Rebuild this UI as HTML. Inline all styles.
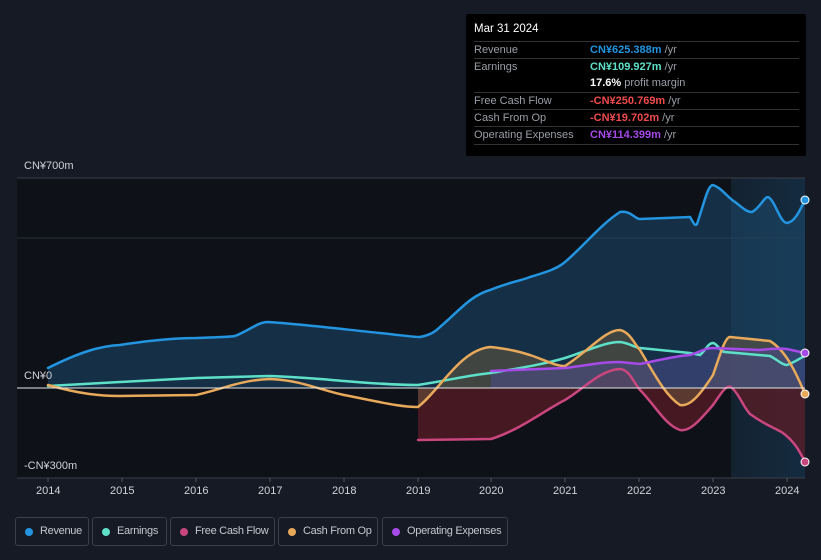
<!DOCTYPE html><html><head><style>
html,body{margin:0;background:#151a25;font-family:"Liberation Sans",sans-serif;width:821px;height:560px;overflow:hidden;position:relative}
.tt{position:absolute;left:466px;top:14px;width:340px;height:142px;background:#000;border-radius:2px}
.tt .h{position:absolute;left:8px;top:9px;color:#fff;font-size:11.5px}
.row{position:absolute;left:8px;width:325px;border-top:1px solid #333;height:17px;font-size:11px;color:#9a9ea6}
.row span{position:absolute;left:116px;top:2px;font-weight:bold;white-space:nowrap}
.row b{font-weight:normal;color:#9a9ea6}
.row .l{position:absolute;left:0;top:2px}
.ax{position:absolute;color:#d0d3d8;font-size:11px}
.lg{position:absolute;top:517px;height:29px;border:1px solid #3a3f4a;border-radius:3px;color:#c4c8ce;font-size:11px;letter-spacing:-0.3px;line-height:27px;box-sizing:border-box;padding-left:24px;white-space:nowrap}
.lg i{position:absolute;left:9px;top:10px;width:8px;height:8px;border-radius:50%}
</style></head><body>
<svg width="821" height="560" style="position:absolute;left:0;top:0">
<defs><linearGradient id="hl" x1="0" x2="1"><stop offset="0" stop-color="#152636"/><stop offset="1" stop-color="#16324a"/></linearGradient></defs>
<rect x="17" y="178" width="788" height="300" fill="#0e1118"/>
<rect x="731" y="178" width="74" height="300" fill="url(#hl)" opacity=".8"/>
<line x1="17" y1="178" x2="805" y2="178" stroke="#3a3f48"/>
<line x1="17" y1="238" x2="805" y2="238" stroke="#2a2f38"/>
<line x1="17" y1="478" x2="805" y2="478" stroke="#3a3f48"/>
<path d="M48,368 C80,352 100,346 120,345 C150,340 180,338 196,338 C220,337 230,337 235,336 C250,330 258,322 268,322 C300,324 350,330 380,333 C400,335 412,337 420,337 C430,335 435,332 440,327 C460,310 470,296 490,290 C510,282 520,281 530,277 C550,271 558,268 565,262 C585,245 600,225 620,212 C630,210 635,219 640,219 L690,217 C693,222 695,227 697,224 C705,200 708,185 713,185 C722,188 728,198 735,202 C742,207 746,212 752,212 C760,208 764,197 768,197 C775,200 780,223 787,223 C795,222 800,210 805,200 L805,388 L48,388Z" fill="#1b4a6e" opacity=".55"/>
<path d="M418,388 L418,440 L491,439 C520,430 545,410 565,400 C585,388 600,370 620,369 C630,370 633,382 640,390 C655,405 665,425 680,430 C690,432 700,420 713,405 C722,392 726,385 731,387 C740,395 742,405 750,414 C765,425 775,428 783,433 C795,442 800,452 805,462 L805,388Z" fill="#5a1c26" opacity=".75"/>
<path d="M418,388 L418,407 C440,390 460,350 490,347 C510,349 520,352 530,355 C545,360 555,366 565,366 C590,350 605,330 620,330 C630,332 635,345 640,350 C655,375 665,395 680,405 C690,407 700,395 713,375 C720,355 725,337 730,337 L770,341 C785,350 795,370 805,394 L805,388Z" fill="#6b5a3e" opacity=".5"/>
<path d="M491,388 L491,371 L565,368 L620,362 L640,364 L690,355 L713,348 L760,350 L787,349 L805,353 L805,388Z" fill="#4a4d8a" opacity=".55"/>
<g fill="none" stroke-width="2.5" stroke-linecap="round">
<path d="M48,368 C80,352 100,346 120,345 C150,340 180,338 196,338 C220,337 230,337 235,336 C250,330 258,322 268,322 C300,324 350,330 380,333 C400,335 412,337 420,337 C430,335 435,332 440,327 C460,310 470,296 490,290 C510,282 520,281 530,277 C550,271 558,268 565,262 C585,245 600,225 620,212 C630,210 635,219 640,219 L690,217 C693,222 695,227 697,224 C705,200 708,185 713,185 C722,188 728,198 735,202 C742,207 746,212 752,212 C760,208 764,197 768,197 C775,200 780,223 787,223 C795,222 800,210 805,200" stroke="#2394df"/>
<path d="M48,386 C80,384 100,383 120,382 L196,378 L270,376 C300,377 320,379 344,381 C380,384 400,385 418,385 C450,380 470,375 491,373 C520,368 545,364 565,358 C590,350 605,342 620,342 C630,343 635,348 640,348 L690,353 L700,355 C706,350 708,343 713,343 C718,344 720,352 725,352 L770,356 C778,360 782,365 787,365 C795,362 800,358 805,356" stroke="#5ee0c8"/>
<path d="M48,385 C80,394 100,396 120,396 L196,395 C220,390 240,380 270,379 C300,380 320,390 344,395 C380,402 400,407 418,407 C440,390 460,350 490,347 C510,349 520,352 530,355 C545,360 555,366 565,366 C590,350 605,330 620,330 C630,332 635,345 640,350 C655,375 665,395 680,405 C690,407 700,395 713,375 C720,355 725,337 730,337 L770,341 C785,350 795,370 805,394" stroke="#e8a95a"/>
<path d="M418,440 L491,439 C520,430 545,410 565,400 C585,388 600,370 620,369 C630,370 633,382 640,390 C655,405 665,425 680,430 C690,432 700,420 713,405 C722,392 726,385 731,387 C740,395 742,405 750,414 C765,425 775,428 783,433 C795,442 800,452 805,462" stroke="#c9467f"/>
<path d="M491,371 L565,368 C590,365 600,362 620,362 L640,364 C660,360 675,356 690,355 C700,352 705,348 713,348 L760,350 C770,349 778,348 787,349 L805,353" stroke="#a64ae8"/>
</g>
<line x1="17" y1="388" x2="805" y2="388" stroke="#e8e8e8" stroke-width="1"/>
<circle cx="805" cy="200" r="4" fill="#2394df" stroke="#fff" stroke-width="1"/>
<circle cx="805" cy="353" r="4" fill="#a64ae8" stroke="#fff" stroke-width="1"/>
<circle cx="805" cy="394" r="4" fill="#e8a95a" stroke="#fff" stroke-width="1"/>
<circle cx="805" cy="462" r="4" fill="#c9467f" stroke="#fff" stroke-width="1"/>
<g stroke="#555" stroke-width="1"><line x1="48" y1="478" x2="48" y2="482"/><line x1="122" y1="478" x2="122" y2="482"/><line x1="196" y1="478" x2="196" y2="482"/><line x1="270" y1="478" x2="270" y2="482"/><line x1="344" y1="478" x2="344" y2="482"/><line x1="418" y1="478" x2="418" y2="482"/><line x1="491" y1="478" x2="491" y2="482"/><line x1="565" y1="478" x2="565" y2="482"/><line x1="639" y1="478" x2="639" y2="482"/><line x1="713" y1="478" x2="713" y2="482"/><line x1="787" y1="478" x2="787" y2="482"/></g>
</svg>
<div class="ax" style="left:24px;top:160px">CN¥700m</div>
<div class="ax" style="left:24px;top:370px">CN¥0</div>
<div class="ax" style="left:24px;top:460px">-CN¥300m</div>
<div class="ax" style="left:36px;top:485px">2014</div><div class="ax" style="left:110px;top:485px">2015</div><div class="ax" style="left:184px;top:485px">2016</div><div class="ax" style="left:258px;top:485px">2017</div><div class="ax" style="left:332px;top:485px">2018</div><div class="ax" style="left:406px;top:485px">2019</div><div class="ax" style="left:479px;top:485px">2020</div><div class="ax" style="left:553px;top:485px">2021</div><div class="ax" style="left:627px;top:485px">2022</div><div class="ax" style="left:701px;top:485px">2023</div><div class="ax" style="left:775px;top:485px">2024</div>
<div class="tt"><div class="h">Mar 31 2024</div>
<div class="row" style="top:27px"><div class="l">Revenue</div><span style="color:#2394df">CN¥625.388m <b>/yr</b></span></div>
<div class="row" style="top:44px"><div class="l">Earnings</div><span style="color:#5ee0c8">CN¥109.927m <b>/yr</b></span></div>
<div class="row" style="top:61px;border-top:none"><span style="color:#fff">17.6% <b>profit margin</b></span></div>
<div class="row" style="top:78px"><div class="l">Free Cash Flow</div><span style="color:#f04b4b">-CN¥250.769m <b>/yr</b></span></div>
<div class="row" style="top:95px"><div class="l">Cash From Op</div><span style="color:#f04b4b">-CN¥19.702m <b>/yr</b></span></div>
<div class="row" style="top:112px;border-bottom:1px solid #333"><div class="l">Operating Expenses</div><span style="color:#a64ae8">CN¥114.399m <b>/yr</b></span></div>
</div>
<div class="lg" style="left:15px;width:74px"><i style="background:#2394df"></i>Revenue</div>
<div class="lg" style="left:92px;width:75px"><i style="background:#5ee0c8"></i>Earnings</div>
<div class="lg" style="left:170px;width:105px"><i style="background:#c9467f"></i>Free Cash Flow</div>
<div class="lg" style="left:278px;width:100px"><i style="background:#e8a95a"></i>Cash From Op</div>
<div class="lg" style="left:382px;width:126px"><i style="background:#a64ae8"></i>Operating Expenses</div>
</body></html>
